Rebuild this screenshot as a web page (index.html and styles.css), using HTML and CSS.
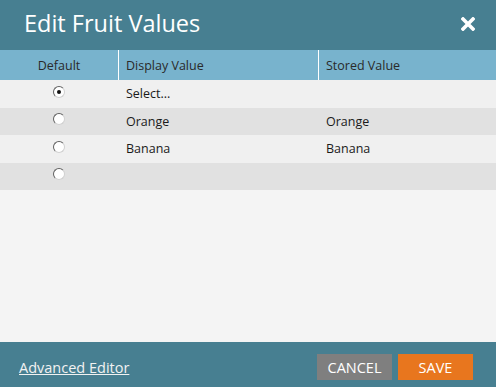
FILE: index.html
```html
<!DOCTYPE html>
<html lang="en">

<head>
    <meta charset="UTF-8">
    <title>Edit Fruit Values</title>
    <link rel="stylesheet" href="styles.css">
</head>

<body>
    <div class="dialog">
        <div class="dialog-header">
            <h1 class="dialog-title">Edit Fruit Values</h1>
            <svg class="dialog-close" viewBox="0 0 14 14" width="14" height="14">
                <path d="M2 2 L12 12 M12 2 L2 12" stroke="#ffffff" stroke-width="3.6" stroke-linecap="square" />
            </svg>
        </div>

        <div class="dialog-body">
            <div class="grid-row grid-head">
                <div class="cell cell-default">Default</div>
                <div class="cell cell-display">Display Value</div>
                <div class="cell cell-stored">Stored Value</div>
            </div>
            <div class="grid-row">
                <div class="cell cell-default"><span class="radio checked"></span></div>
                <div class="cell cell-display">Select...</div>
                <div class="cell cell-stored"></div>
            </div>
            <div class="grid-row alt">
                <div class="cell cell-default"><span class="radio"></span></div>
                <div class="cell cell-display">Orange</div>
                <div class="cell cell-stored">Orange</div>
            </div>
            <div class="grid-row">
                <div class="cell cell-default"><span class="radio"></span></div>
                <div class="cell cell-display">Banana</div>
                <div class="cell cell-stored">Banana</div>
            </div>
            <div class="grid-row alt">
                <div class="cell cell-default"><span class="radio"></span></div>
                <div class="cell cell-display"></div>
                <div class="cell cell-stored"></div>
            </div>
        </div>

        <div class="dialog-footer">
            <a class="advanced-link" href="#">Advanced Editor</a>
            <div class="buttons">
                <button class="btn btn-cancel">CANCEL</button>
                <button class="btn btn-save">SAVE</button>
            </div>
        </div>
    </div>
</body>

</html>
```

FILE: styles.css
```css
html,
body {
    margin: 0;
    padding: 0;
    height: 100%;
}

body {
    font-family: 'Open Sans', 'DejaVu Sans', sans-serif;
    background-color: #f4f4f4;
}

.dialog {
    display: flex;
    flex-direction: column;
    height: 100%;
}

/* Title bar */
.dialog-header {
    height: 50px;
    background-color: #477f91;
    display: flex;
    align-items: center;
    justify-content: space-between;
    padding: 0 21px 0 24px;
    flex-shrink: 0;
}

.dialog-title {
    margin: 0;
    font-size: 23.5px;
    font-weight: normal;
    color: #ffffff;
    line-height: 1;
    padding-bottom: 2px;
}

.dialog-close {
    display: block;
    margin-bottom: 2px;
}

/* Values grid */
.dialog-body {
    flex: 1;
    background-color: #f4f4f4;
}

.grid-row {
    display: grid;
    grid-template-columns: 118px 200px 1fr;
    height: 27.5px;
    background-color: #f0f0f0;
    font-size: 12.5px;
    color: #1a1a1a;
}

.grid-row.alt {
    background-color: #e1e1e1;
}

.grid-head {
    height: 30px;
    background-color: #78b3cd;
    color: #2a2a2a;
}

.grid-head .cell-display,
.grid-head .cell-stored {
    border-left: 1px solid #ffffff;
    padding-left: 7px;
}

.cell {
    display: flex;
    align-items: center;
    padding-left: 8px;
}

.cell-default {
    justify-content: center;
    padding-left: 0;
}

.radio {
    width: 10px;
    height: 10px;
    border-radius: 50%;
    border: 1px solid;
    border-color: #606060 #d0d0d0 #d0d0d0 #606060;
    background-color: #ffffff;
    display: flex;
    align-items: center;
    justify-content: center;
    margin-bottom: 4px;
}

.radio.checked::after {
    content: "";
    width: 4px;
    height: 4px;
    border-radius: 50%;
    background-color: #111111;
}

/* Footer */
.dialog-footer {
    height: 45px;
    background-color: #477f91;
    display: flex;
    align-items: center;
    justify-content: space-between;
    padding: 0 23px 0 19px;
    flex-shrink: 0;
}

.advanced-link {
    color: #f2f2f2;
    font-size: 14.5px;
    text-decoration: underline;
    padding-top: 5px;
}

.buttons {
    display: flex;
    gap: 6px;
    padding-top: 5px;
}

.btn {
    width: 75px;
    height: 26px;
    border: none;
    border-radius: 0;
    color: #ffffff;
    font-family: 'Open Sans', 'DejaVu Sans', sans-serif;
    font-size: 14.5px;
    padding: 0;
}

.btn-cancel {
    background-color: #7f7f7f;
}

.btn-save {
    background-color: #e8761e;
}
```
